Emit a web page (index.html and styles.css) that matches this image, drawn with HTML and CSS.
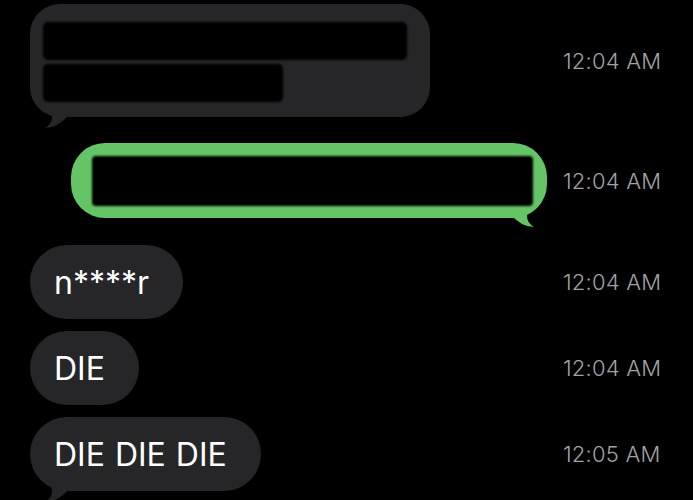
FILE: index.html
```html
<!DOCTYPE html>
<html>
<head>
<meta charset="utf-8">
<link rel="stylesheet" href="styles.css">
</head>
<body>
<main class="thread">
  <div class="row row-1">
    <div class="msg-col">
      <div class="bubble gray redacted">
        <div class="redact r1"></div>
        <div class="redact r2"></div>
        <svg class="tail tail-left" width="28" height="30" viewBox="0 0 28 30"><path d="M6 0 L8 17 Q8 24 1 28 Q14 28 26 14 L26 0 Z" fill="#262628"/></svg>
      </div>
    </div>
    <div class="time">12:04 AM</div>
  </div>

  <div class="row row-2">
    <div class="msg-col end">
      <div class="bubble green">
        <div class="redact g1"></div>
        <svg class="tail tail-right" width="28" height="30" viewBox="0 0 28 30"><path d="M6 0 L8 17 Q8 24 1 28 Q14 28 26 14 L26 0 Z" fill="#65c466"/></svg>
      </div>
    </div>
    <div class="time">12:04 AM</div>
  </div>

  <div class="row row-3">
    <div class="msg-col">
      <div class="bubble gray text">n****r</div>
    </div>
    <div class="time">12:04 AM</div>
  </div>

  <div class="row row-4">
    <div class="msg-col">
      <div class="bubble gray text">DIE</div>
    </div>
    <div class="time">12:04 AM</div>
  </div>

  <div class="row row-5">
    <div class="msg-col">
      <div class="bubble gray text">DIE DIE DIE
        <svg class="tail tail-left" width="28" height="30" viewBox="0 0 28 30"><path d="M6 0 L8 17 Q8 24 1 28 Q14 28 26 14 L26 0 Z" fill="#262628"/></svg>
      </div>
    </div>
    <div class="time">12:05 AM</div>
  </div>
</main>
</body>
</html>
```

FILE: styles.css
```css
html, body {
  margin: 0;
  padding: 0;
  background: #000;
  height: 100%;
  overflow: hidden;
}

body {
  font-family: Inter, "Noto Sans", "Liberation Sans", sans-serif;
  color: #fff;
}

.thread {
  display: flex;
  flex-direction: column;
  padding: 4px 0 0 30px;
}

.row {
  display: grid;
  grid-template-columns: 533px 130px;
  align-items: center;
}

.row-2 { margin-top: 26px; }
.row-3 { margin-top: 27px; }
.row-4 { margin-top: 12px; }
.row-5 { margin-top: 12px; }

.msg-col {
  display: flex;
  justify-content: flex-start;
}

.msg-col.end {
  justify-content: flex-end;
  padding-right: 16px;
}

.time {
  font-size: 22px;
  font-weight: 300;
  color: #a2a2a6;
  letter-spacing: 0.2px;
  white-space: nowrap;
}

.bubble {
  position: relative;
  box-sizing: border-box;
  isolation: isolate;
}

.gray { background: #262628; }
.green { background: #65c466; }

.redacted {
  width: 400px;
  height: 113px;
  border-radius: 30px;
  padding: 18px 23px 15px 13px;
  display: flex;
  flex-direction: column;
  gap: 4px;
}

.redact {
  background: #000;
  border-radius: 5px;
  filter: blur(1.2px);
}

.r1 { width: 364px; height: 38px; }
.r2 { width: 240px; height: 38px; }

.green {
  width: 476px;
  height: 75px;
  border-radius: 34px;
  padding: 13px 14px 12px 21px;
  display: flex;
}

.g1 { flex: 1; border-radius: 4px; }

.text {
  height: 74px;
  border-radius: 37px;
  padding: 0 34px 0 24px;
  display: flex;
  align-items: center;
  font-size: 32px;
  word-spacing: 1px;
  white-space: nowrap;
}

.tail {
  position: absolute;
  bottom: -13px;
  z-index: -1;
}

.tail-left { left: 14px; }

.tail-right {
  right: 12px;
  bottom: -11px;
  transform: scaleX(-1);
}
```
